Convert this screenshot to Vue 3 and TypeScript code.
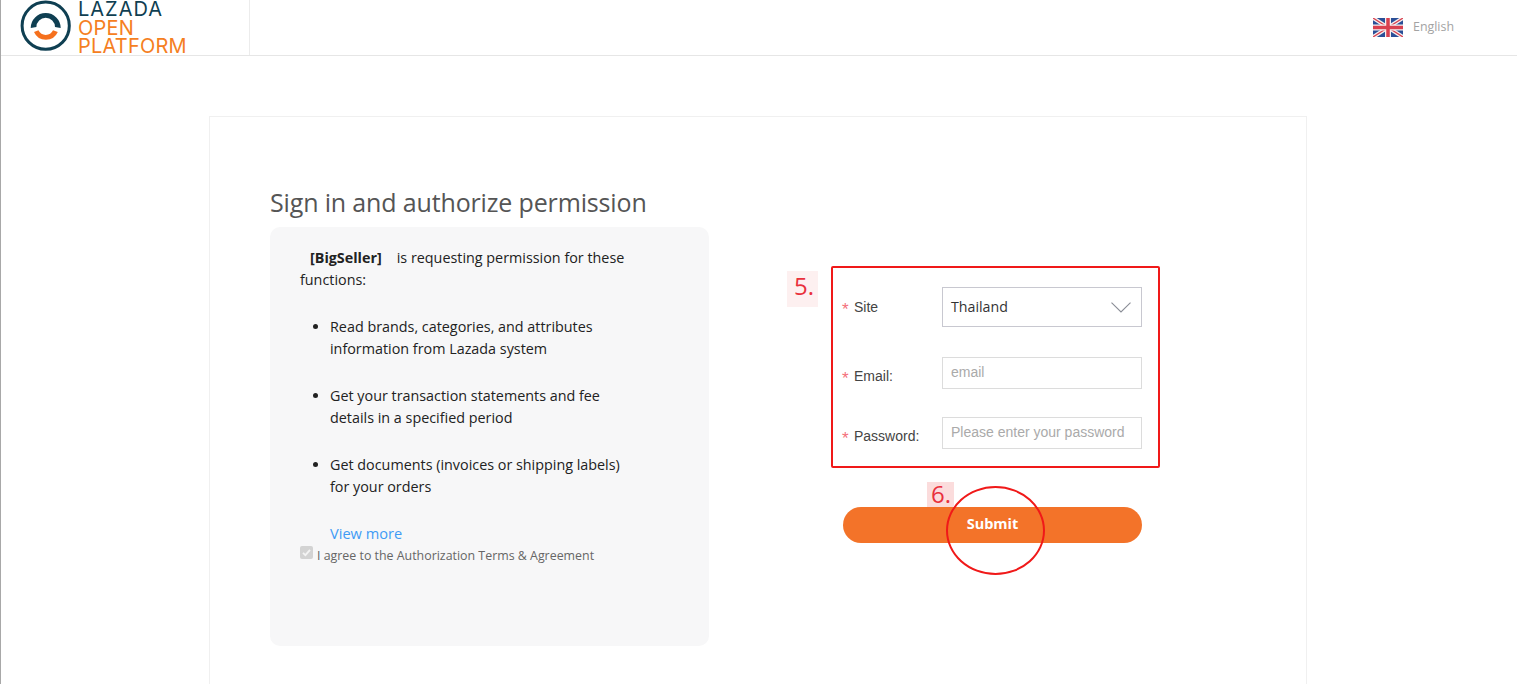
<script setup lang="ts">
const items: string[][] = [
  ['Read brands, categories, and attributes', 'information from Lazada system'],
  ['Get your transaction statements and fee', 'details in a specified period'],
  ['Get documents (invoices or shipping labels)', 'for your orders'],
]
</script>

<template>
  <div class="page">
    <header class="top">
      <div class="brand">
        <svg class="mark" width="54" height="54" viewBox="0 0 54 54" aria-hidden="true">
          <circle cx="25.7" cy="25.7" r="23.6" fill="none" stroke="#0f3f52" stroke-width="3" />
          <path d="M10.7 28 A15 15 0 0 1 40.7 28 L35 27 A9.3 9.3 0 0 0 16.4 27 Z" fill="#0f3f52" />
          <path d="M14 32 L18.5 30.3 A8 8 0 0 0 33 30.3 L37.8 32 A13 13 0 0 1 14 32 Z" fill="#f5701d" />
        </svg>
        <div class="wordmark">
          <span class="navy">LAZADA</span>
          <span>OPEN</span>
          <span>PLATFORM</span>
        </div>
      </div>
      <div class="lang">
        <svg width="30" height="19" viewBox="0 0 60 38" aria-hidden="true">
          <rect width="60" height="38" fill="#2a4f97" />
          <path d="M0 0 L60 38 M60 0 L0 38" stroke="#f4f0f0" stroke-width="8" />
          <path d="M0 0 L60 38 M60 0 L0 38" stroke="#d9404f" stroke-width="2.6" />
          <path d="M30 0 V38 M0 19 H60" stroke="#f4f0f0" stroke-width="12" />
          <path d="M30 0 V38 M0 19 H60" stroke="#d9404f" stroke-width="7" />
        </svg>
        <span>English</span>
      </div>
    </header>

    <main class="card">
      <h1>Sign in and authorize permission</h1>
      <div class="columns">
        <section class="panel">
          <p class="intro"><b>[BigSeller]</b><span class="gap" />is requesting permission for these functions:</p>
          <ul>
            <li v-for="(item, i) in items" :key="i">{{ item[0] }}<br />{{ item[1] }}</li>
          </ul>
          <a class="more">View more</a>
          <label class="agree">
            <span class="tick">
              <svg width="13" height="13" viewBox="0 0 13 13" aria-hidden="true">
                <path d="M3 6.8 L5.4 9.2 L10 3.8" fill="none" stroke="#f4f4f4" stroke-width="1.8" />
              </svg>
            </span>
            <span>I agree to the Authorization Terms &amp; Agreement</span>
          </label>
        </section>

        <section class="side">
          <div class="formbox">
            <span class="note note5">5.</span>
            <div class="row first">
              <span class="label"><i>*</i>Site</span>
              <div class="select">
                <span class="selected">Thailand</span>
                <svg width="20" height="11" viewBox="0 0 20 11" aria-hidden="true">
                  <path d="M0.5 0.7 L10 10 L19.5 0.7" fill="none" stroke="#8a8d96" stroke-width="1.1" />
                </svg>
              </div>
            </div>
            <div class="row second">
              <span class="label low"><i>*</i>Email:</span>
              <input class="field" type="text" placeholder="email" />
            </div>
            <div class="row third">
              <span class="label low"><i>*</i>Password:</span>
              <input class="field" type="password" placeholder="Please enter your password" />
            </div>
          </div>
          <div class="submitwrap">
            <span class="note note6">6.</span>
            <button class="submit" type="button"><span>Submit</span></button>
            <span class="ring" />
          </div>
        </section>
      </div>
    </main>
  </div>
</template>

<style>
html, body { margin: 0; background: #fff; overflow: hidden; }
</style>

<style scoped>
.page {
  height: 684px;
  overflow: hidden;
  box-sizing: border-box;
  border-left: 1px solid #a8a8a8;
  background: #fff;
  font-family: "Open Sans", "Noto Sans", sans-serif;
}
.top {
  height: 56px;
  box-sizing: border-box;
  border-bottom: 1px solid #e6e6e6;
  display: flex;
  justify-content: space-between;
}
.brand {
  width: 249px;
  height: 55px;
  box-sizing: border-box;
  border-right: 1px solid #ececec;
  padding-left: 19px;
  display: flex;
  gap: 4px;
}
.mark { flex: none; }
.wordmark {
  display: flex;
  flex-direction: column;
  font-family: Inter, sans-serif;
  font-size: 20px;
  line-height: 18.6px;
  letter-spacing: 0.2px;
  color: #f5801f;
}
.navy { color: #0f3f52; letter-spacing: 1px; }
.lang {
  display: flex;
  align-items: center;
  gap: 10px;
  padding-right: 63px;
  height: 55px;
  font-size: 12.4px;
  color: #a3a3a3;
}
.lang span { position: relative; top: -1px; }
.card {
  width: 1098px;
  height: 640px;
  box-sizing: border-box;
  margin: 60px 0 0 208px;
  border: 1px solid #f0f0f0;
  padding: 66px 0 0 60px;
}
h1 {
  margin: 0;
  height: 44px;
  font-size: 25px;
  letter-spacing: -0.15px;
  line-height: 38px;
  font-weight: 400;
  color: #555;
}
.columns { display: flex; }
.panel {
  width: 439px;
  height: 419px;
  flex: none;
  box-sizing: border-box;
  background: #f7f7f8;
  border-radius: 10px;
  padding: 20px 30px 0;
  font-size: 14.35px;
  line-height: 22px;
  color: #222;
}
.intro { margin: 0; width: 335px; text-indent: 10px; }
.gap { display: inline-block; width: 15px; }
b { font-weight: 700; }
ul { margin: 25px 0 0; padding: 0 0 0 30px; }
li { margin-bottom: 25px; }
.more {
  display: block;
  margin: -1px 0 0 30px;
  color: #3f9bf5;
  font-size: 14.6px;
  line-height: 22px;
}
.agree {
  display: flex;
  align-items: flex-start;
  gap: 4px;
  margin-top: 2px;
  font-size: 12.4px;
  line-height: 19px;
  color: #666;
}
.tick {
  width: 13px;
  height: 13px;
  border-radius: 2px;
  background: #d3d3d3;
  display: block;
}
.tick svg { display: block; }
.side { margin-left: 122px; width: 329px; }
.formbox {
  position: relative;
  box-sizing: border-box;
  width: 329px;
  height: 202px;
  margin-top: 39px;
  border: 2px solid #f01919;
  border-radius: 2px;
  padding: 19px 16px 0 9px;
  font-family: "Liberation Sans", Arial, sans-serif;
}
.row { display: flex; justify-content: space-between; align-items: center; }
.second { margin-top: 30px; }
.third { margin-top: 28px; }
.label { font-size: 14px; color: #444; }
.label.low { position: relative; top: 3px; }
.label i {
  display: inline-block;
  width: 12px;
  font-style: normal;
  color: #f4707a;
  font-size: 17px;
  line-height: 0;
  position: relative;
  top: 3px;
}
.select {
  width: 200px;
  height: 40px;
  box-sizing: border-box;
  border: 1px solid #c8c8d0;
  display: flex;
  align-items: center;
  justify-content: space-between;
  padding: 0 10px 0 8px;
  font-family: "Open Sans", sans-serif;
  font-size: 14.2px;
  color: #333;
}
.selected { position: relative; top: -1px; }
.field {
  width: 200px;
  height: 32px;
  box-sizing: border-box;
  border: 1px solid #dcdcdc;
  border-radius: 0;
  padding: 0 8px 2px;
  outline: none;
  font-family: "Liberation Sans", Arial, sans-serif;
  font-size: 14px;
  background: #fff;
}
.field::placeholder { color: #aaa; opacity: 1; }
.note {
  position: absolute;
  font-family: "Open Sans", sans-serif;
  font-size: 24px;
  color: #e9303c;
  background: #fdf0f0;
  white-space: nowrap;
  box-sizing: border-box;
}
.note5 { left: -46px; top: 3px; height: 36px; width: 31px; padding-left: 7px; line-height: 30px; }
.note6 { left: 84px; top: -25px; height: 25px; width: 27px; padding-left: 4px; line-height: 24px; background: #fbdcdc; z-index: 2; }
.submitwrap { position: relative; margin: 39px 0 0 12px; width: 299px; }
.submit {
  display: block;
  width: 299px;
  height: 36px;
  border: 0;
  border-radius: 18px;
  background: #f37329;
  color: #fff;
  font-family: "Open Sans", sans-serif;
  font-size: 14.5px;
  font-weight: 700;
  padding: 0;
}
.submit span { position: relative; top: -2px; }
.ring {
  position: absolute;
  left: 103px;
  top: -21px;
  width: 99px;
  height: 89px;
  box-sizing: border-box;
  border: 2px solid #f01919;
  border-radius: 50%;
}
</style>
